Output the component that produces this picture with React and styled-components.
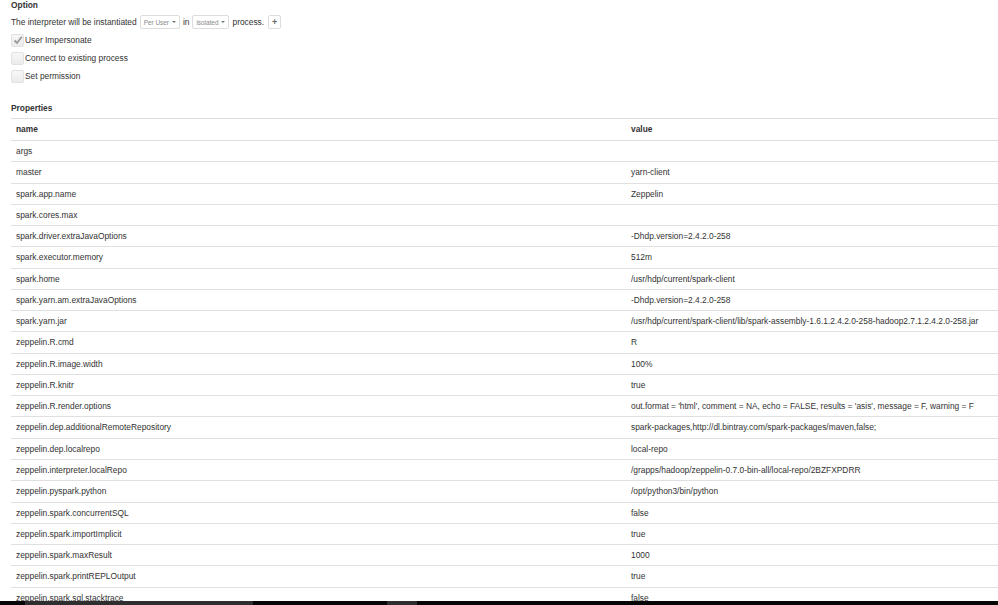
import React from 'react';
import styled, { createGlobalStyle } from 'styled-components';

const GlobalStyle = createGlobalStyle`
  html, body {
    margin: 0;
    padding: 0;
    overflow: hidden;
    background: #fff;
  }
  body {
    font-family: 'Liberation Sans', Arial, sans-serif;
    font-size: 8.4px;
    color: #333;
  }
`;

const Page = styled.div`
  padding: 0 0 0 11px;
`;

const Heading = styled.div`
  font-weight: bold;
  color: #333;
  height: ${props => props.h}px;
  line-height: ${props => props.h}px;
  margin-top: ${props => props.mt || 0}px;
`;

const OptionLine = styled.div`
  display: flex;
  align-items: center;
  gap: 3px;
  height: 14px;
  margin-top: 4px;
`;

const DropButton = styled.span`
  display: inline-flex;
  align-items: center;
  gap: 3px;
  height: 12px;
  padding: 0 3px;
  border: 1px solid #ddd;
  border-radius: 2px;
  background: #fff;
  color: #888;
  font-size: 6.4px;
`;

const Caret = styled.span`
  width: 0;
  height: 0;
  border-left: 2px solid transparent;
  border-right: 2px solid transparent;
  border-top: 2px solid #777;
`;

const PlusButton = styled.span`
  display: inline-flex;
  align-items: center;
  justify-content: center;
  width: 11px;
  height: 12px;
  border: 1px solid #ddd;
  border-radius: 2px;
  color: #666;
  font-size: 9px;
  font-weight: bold;
  margin-left: 1px;
`;

const CheckRow = styled.label`
  display: flex;
  align-items: center;
  height: 12px;
  margin-top: ${props => props.mt}px;
  font-size: 8.4px;
  color: #333;
`;

const Box = styled.span`
  width: 11px;
  height: 11px;
  border: 1px solid #e2e2e2;
  border-radius: 2px;
  background: linear-gradient(#f7f7f7, #ebebeb);
  margin-right: 1px;
  display: inline-flex;
  align-items: center;
  justify-content: center;
`;

const Table = styled.table`
  width: 987px;
  border-collapse: collapse;
  margin-top: 4px;
  table-layout: fixed;
`;

const Th = styled.th`
  text-align: left;
  font-weight: bold;
  color: #333;
  padding: 0 5px;
  line-height: 21px;
  border-top: 1px solid #dedede;
  border-bottom: 1px solid #dedede;
  width: ${props => props.w || 'auto'};
`;

const Td = styled.td`
  padding: 0 5px;
  line-height: 20.27px;
  border-top: 1px solid #e0e0e0;
  color: #333;
  white-space: nowrap;
`;

const TaskBar = styled.div`
  position: fixed;
  left: 0;
  right: 0;
  bottom: 0;
  height: 4px;
  background: #050505;
`;

const TaskItem = styled.div`
  position: absolute;
  top: 0;
  bottom: 0;
  left: ${props => props.x}px;
  width: ${props => props.w}px;
  background: #2e2e2e;
`;

const properties = [
  ['args', ''],
  ['master', 'yarn-client'],
  ['spark.app.name', 'Zeppelin'],
  ['spark.cores.max', ''],
  ['spark.driver.extraJavaOptions', '-Dhdp.version=2.4.2.0-258'],
  ['spark.executor.memory', '512m'],
  ['spark.home', '/usr/hdp/current/spark-client'],
  ['spark.yarn.am.extraJavaOptions', '-Dhdp.version=2.4.2.0-258'],
  ['spark.yarn.jar', '/usr/hdp/current/spark-client/lib/spark-assembly-1.6.1.2.4.2.0-258-hadoop2.7.1.2.4.2.0-258.jar'],
  ['zeppelin.R.cmd', 'R'],
  ['zeppelin.R.image.width', '100%'],
  ['zeppelin.R.knitr', 'true'],
  ['zeppelin.R.render.options', "out.format = 'html', comment = NA, echo = FALSE, results = 'asis', message = F, warning = F"],
  ['zeppelin.dep.additionalRemoteRepository', 'spark-packages,http://dl.bintray.com/spark-packages/maven,false;'],
  ['zeppelin.dep.localrepo', 'local-repo'],
  ['zeppelin.interpreter.localRepo', '/grapps/hadoop/zeppelin-0.7.0-bin-all/local-repo/2BZFXPDRR'],
  ['zeppelin.pyspark.python', '/opt/python3/bin/python'],
  ['zeppelin.spark.concurrentSQL', 'false'],
  ['zeppelin.spark.importImplicit', 'true'],
  ['zeppelin.spark.maxResult', '1000'],
  ['zeppelin.spark.printREPLOutput', 'true'],
  ['zeppelin.spark.sql.stacktrace', 'false'],
  ['zeppelin.spark.useHiveContext', 'true']
];

function Check() {
  return (
    <svg width="10" height="10" viewBox="0 0 10 10">
      <path d="M1.5 5.5 L4 8 L8.8 1.8" stroke="#999" strokeWidth="1.8" fill="none" />
    </svg>
  );
}

export default function App() {
  return (
    <Page>
      <GlobalStyle />
      <Heading h={11}>Option</Heading>
      <OptionLine>
        <span>The interpreter will be instantiated</span>
        <DropButton>Per User <Caret /></DropButton>
        <span>in</span>
        <DropButton>isolated <Caret /></DropButton>
        <span>process.</span>
        <PlusButton>+</PlusButton>
      </OptionLine>
      <CheckRow mt={5}>
        <Box><Check /></Box>User Impersonate
      </CheckRow>
      <CheckRow mt={6}>
        <Box />Connect to existing process
      </CheckRow>
      <CheckRow mt={6}>
        <Box />Set permission
      </CheckRow>
      <Heading h={12} mt={20}>Properties</Heading>
      <Table>
        <thead>
          <tr>
            <Th w="605px">name</Th>
            <Th>value</Th>
          </tr>
        </thead>
        <tbody>
          {properties.map(([name, value]) => (
            <tr key={name}>
              <Td>{name}</Td>
              <Td>{value}</Td>
            </tr>
          ))}
        </tbody>
      </Table>
      <TaskBar>
        <TaskItem x={25} w={228} />
        <TaskItem x={387} w={30} />
      </TaskBar>
    </Page>
  );
}
